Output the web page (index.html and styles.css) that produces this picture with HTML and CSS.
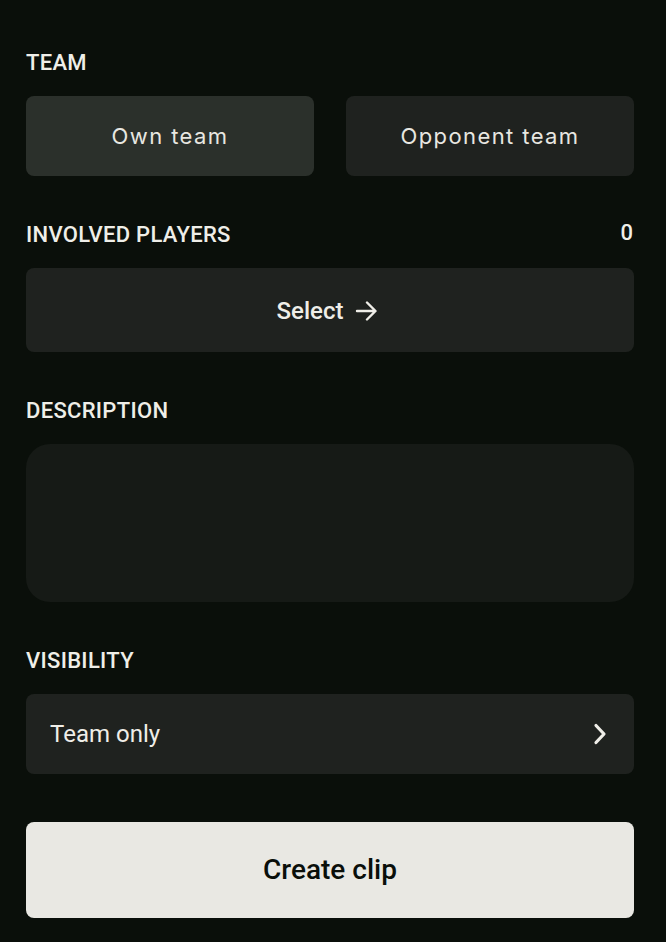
FILE: index.html
```html
<!DOCTYPE html>
<html lang="en">
<head>
<meta charset="utf-8">
<title>Create clip</title>
<link rel="stylesheet" href="styles.css">
</head>
<body>
<main class="form">
  <section class="field">
    <div class="label-row"><span class="label">TEAM</span></div>
    <div class="team-choice">
      <button class="team-btn team-btn--active">Own team</button>
      <button class="team-btn">Opponent team</button>
    </div>
  </section>

  <section class="field">
    <div class="label-row"><span class="label">INVOLVED PLAYERS</span><span class="count">0</span></div>
    <button class="select-btn">
      <span>Select</span>
      <svg class="arrow" width="22" height="22" viewBox="0 0 22 22" fill="none" stroke="currentColor" stroke-width="2.4" stroke-linecap="round" stroke-linejoin="round"><path d="M2 11h18M12 2.5l8.5 8.5-8.5 8.5"/></svg>
    </button>
  </section>

  <section class="field">
    <div class="label-row"><span class="label">DESCRIPTION</span></div>
    <div class="description"></div>
  </section>

  <section class="field">
    <div class="label-row"><span class="label">VISIBILITY</span></div>
    <button class="visibility">
      <span>Team only</span>
      <svg class="chevron" width="16" height="24" viewBox="0 0 16 24" fill="none" stroke="currentColor" stroke-width="3.2" stroke-linecap="round" stroke-linejoin="round"><path d="M4 3.5l8 8.5-8 8.5"/></svg>
    </button>
  </section>

  <button class="create">Create clip</button>
</main>
</body>
</html>
```

FILE: styles.css
```css
* { box-sizing: border-box; }
html, body {
  margin: 0;
  background: #0a0f0a;
}
body {
  font-family: Roboto, "Liberation Sans", sans-serif;
  color: #efeee8;
}
.form {
  padding: 52px 32px 24px 26px;
  display: flex;
  flex-direction: column;
  gap: 48px;
}
.field {
  display: flex;
  flex-direction: column;
  gap: 22px;
}
.label-row {
  display: flex;
  justify-content: space-between;
  align-items: flex-start;
  height: 22px;
}
.label {
  font-size: 22px;
  line-height: 22px;
  font-weight: 500;
  letter-spacing: 0.3px;
}
.count {
  font-size: 22px;
  line-height: 22px;
  font-weight: 500;
  margin-top: -2px;
  margin-right: 1px;
}
button {
  font: inherit;
  color: inherit;
  border: 0;
  margin: 0;
  cursor: pointer;
}
.team-choice {
  display: grid;
  grid-template-columns: 1fr 1fr;
  gap: 32px;
}
.team-btn {
  height: 80px;
  border-radius: 8px;
  background: #1f221f;
  font-family: Inter, "Noto Sans", sans-serif;
  font-size: 22px;
  font-weight: 400;
  letter-spacing: 1.4px;
  color: #e8e7e1;
  padding-bottom: 1px;
}
.team-btn--active {
  background: #2b302b;
}
.select-btn {
  height: 84px;
  border-radius: 8px;
  background: #1f221f;
  display: flex;
  align-items: center;
  justify-content: center;
  gap: 12px;
  font-size: 24px;
  font-weight: 500;
  padding: 2px 6px 0 0;
}
.arrow { display: block; margin-top: -1px; }
.description {
  height: 158px;
  border-radius: 24px;
  background: #161a16;
}
.visibility {
  height: 80px;
  border-radius: 8px;
  background: #1f221f;
  display: flex;
  align-items: center;
  justify-content: space-between;
  padding: 0 26px 0 24px;
  font-size: 24px;
  font-weight: 400;
}
.chevron { display: block; }
.create {
  height: 96px;
  border-radius: 8px;
  background: #e9e8e3;
  color: #0a0f0a;
  font-size: 28px;
  font-weight: 500;
  padding-bottom: 3px;
}
```
